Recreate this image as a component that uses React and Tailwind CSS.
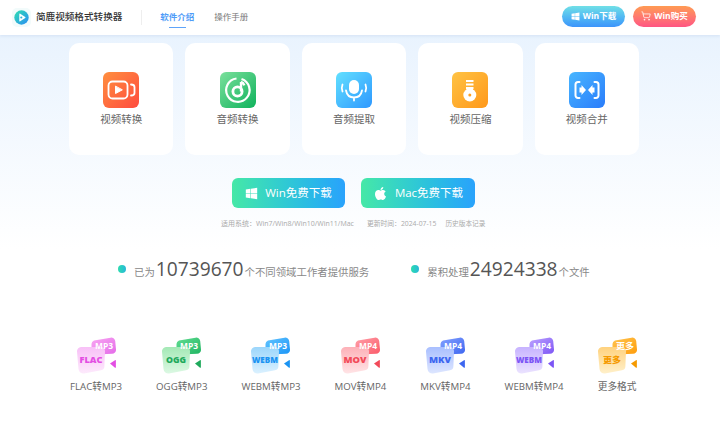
import { FaWindows, FaApple } from 'react-icons/fa';
import { ShoppingCart } from 'lucide-react';

const FONT = 'font-["Open_Sans","Noto_Sans_CJK_SC",sans-serif]';

const tools = [
  {
    label: '视频转换',
    from: '#ff8f3f',
    to: '#ff4b3e',
    icon: (
      <g stroke="#fff" fill="none" strokeWidth="1.800" strokeLinecap="round">
        <rect x="5.500" y="9.500" width="19" height="17" rx="4" />
        <path d="M12.500 14.500v7l6.500-3.500z" fill="#fff" strokeLinejoin="round" strokeWidth="1" />
        <path d="M28 12.500c2.500 0 3.500 1 3.500 2.500v6c0 1.500-1 2.500-3.500 2.500" />
      </g>
    ),
  },
  {
    label: '音频转换',
    from: '#7be09c',
    to: '#0fb25c',
    icon: (
      <g stroke="#fff" fill="none">
        <path d="M16.500 6.500a11.700 11.700 0 1 0 5 .5" strokeWidth="2.200" />
        <circle cx="17.500" cy="19.500" r="4.600" strokeWidth="2.800" />
        <path d="M21 19.500V10" strokeWidth="2.400" />
        <path d="M21 10c1.500.5 2.800 1.700 3.300 3.300" strokeWidth="2.400" />
      </g>
    ),
  },
  {
    label: '音频提取',
    from: '#62e0ff',
    to: '#2e98ff',
    icon: (
      <g stroke="#fff" fill="none" strokeWidth="1.800" strokeLinecap="round">
        <rect x="13" y="8" width="10" height="14" rx="5" fill="#fff" stroke="none" />
        <path d="M10 18.500c.8 4.500 4 7 8 7s7.200-2.500 8-7M18 25.500v3" />
        <path d="M6.500 12.500c-.8 2-.8 5 0 7M29.500 12.500c.8 2 .8 5 0 7" />
      </g>
    ),
  },
  {
    label: '视频压缩',
    from: '#ffc344',
    to: '#ff981a',
    icon: (
      <g fill="#fff">
        <rect x="14" y="8" width="7.500" height="2" />
        <rect x="14" y="11.500" width="7.500" height="2" />
        <rect x="14" y="15" width="7.500" height="2" />
        <circle cx="17.800" cy="23" r="6.500" />
        <rect x="14.500" y="16" width="6.500" height="4" />
        <circle cx="17.800" cy="23" r="1.500" fill="#ff9f22" />
      </g>
    ),
  },
  {
    label: '视频合并',
    from: '#48b6ff',
    to: '#2a7cfb',
    icon: (
      <g fill="#fff">
        <path d="M10.500 10H9a2.500 2.500 0 0 0-2.500 2.500v11A2.500 2.500 0 0 0 9 26h1.500M25.500 10H27a2.500 2.500 0 0 1 2.500 2.500v11A2.500 2.500 0 0 1 27 26h-1.500" fill="none" stroke="#fff" strokeWidth="2" strokeLinecap="round" />
        <path d="M10.500 15.500h2V13l4.500 5-4.500 5v-2.500h-2zM25.500 15.500h-2V13L19 18l4.500 5v-2.500h2z" />
      </g>
    ),
  },
];

const formats = [
  { id: 'flac', src: 'FLAC', srcW: 23, dst: 'MP3', label: 'FLAC转MP3', back: ['#f9a8f2', '#e46ae9'], front: ['#fdeafc', '#f8c0f7'], accent: '#e34ee3' },
  { id: 'ogg', src: 'OGG', srcW: 20, dst: 'MP3', label: 'OGG转MP3', back: ['#62dd92', '#20b563'], front: ['#dcf8e3', '#a4e9b6'], accent: '#1fa95c' },
  { id: 'webm', src: 'WEBM', srcW: 26, dst: 'MP3', label: 'WEBM转MP3', back: ['#63c4ff', '#1a95f7'], front: ['#dbf1ff', '#9cd6fb'], accent: '#1a93f2' },
  { id: 'mov', src: 'MOV', srcW: 23, dst: 'MP4', label: 'MOV转MP4', back: ['#ffa0a9', '#fb5a69'], front: ['#ffe4e6', '#fdb1b8'], accent: '#f24a59' },
  { id: 'mkv', src: 'MKV', srcW: 22, dst: 'MP4', label: 'MKV转MP4', back: ['#84a1ff', '#3d66f0'], front: ['#dde6ff', '#a9bfff'], accent: '#3d66f0' },
  { id: 'webm4', src: 'WEBM', srcW: 26, dst: 'MP4', label: 'WEBM转MP4', back: ['#bda3ff', '#7c55f5'], front: ['#ebe3ff', '#c7b3ff'], accent: '#7c55f5' },
  { id: 'more', src: '更多', srcW: 18, dst: '更多', label: '更多格式', back: ['#ffc552', '#ff9c0a'], front: ['#fff0ca', '#ffd27e'], accent: '#f59a00' },
];

function ToolIcon({ tool, id }) {
  return (
    <svg width="36" height="36" viewBox="0 0 36 36">
      <defs>
        <linearGradient id={id} x1="0" y1="0" x2="1" y2="1">
          <stop offset="0" stopColor={tool.from} />
          <stop offset="1" stopColor={tool.to} />
        </linearGradient>
      </defs>
      <rect width="36" height="36" rx="6" fill={`url(#${id})`} />
      {tool.icon}
    </svg>
  );
}

function FormatIcon({ item }) {
  return (
    <svg width="39" height="37" viewBox="0 0 39 37" className="shrink-0">
      <defs>
        <linearGradient id={`${item.id}-b`} x1="0" y1="0" x2="1" y2="1">
          <stop offset="0" stopColor={item.back[0]} />
          <stop offset="1" stopColor={item.back[1]} />
        </linearGradient>
        <linearGradient id={`${item.id}-f`} x1="0" y1="0" x2="0" y2="1">
          <stop offset="0" stopColor={item.front[1]} />
          <stop offset="1" stopColor={item.front[0]} />
        </linearGradient>
      </defs>
      <path d="M17 3.500 33.500 .7a4 4 0 0 1 4.700 3.300L39 12.500a4 4 0 0 1-4 4.300l-16 .7a4 4 0 0 1-4.500-4V7.500A4 4 0 0 1 17 3.500z" fill={`url(#${item.id}-b)`} />
      <path d="M4 10h20a4 4 0 0 1 4 4.200l-.6 15a4 4 0 0 1-3.400 4L7 36.500a5 5 0 0 1-5.500-4.500L0 14.500A4.200 4.200 0 0 1 4 10z" fill={`url(#${item.id}-f)`} />
      <text x="27" y="12" textAnchor="middle" fontSize="8.500" fontWeight="700" fill="#fff" textLength="18" lengthAdjust="spacingAndGlyphs" fontFamily="Open Sans, Noto Sans CJK SC, sans-serif">{item.dst}</text>
      <text x="14" y="26" textAnchor="middle" fontSize="8.500" fontWeight="800" fill={item.accent} textLength={item.srcW} lengthAdjust="spacingAndGlyphs" fontFamily="Open Sans, Noto Sans CJK SC, sans-serif">{item.src}</text>
      <path d="M33 26.500l5-3.300a.6.600 0 0 1 .9.500v6.500a.6.600 0 0 1-.9.500z" fill={item.accent} />
    </svg>
  );
}

export default function App() {
  return (
    <div className={`h-[424px] w-[720px] overflow-hidden bg-white ${FONT}`}>
      {/* 顶部导航 */}
      <header className="relative flex h-[35px] items-center bg-white pl-[12px] pr-[24px] shadow-[0_1px_3px_rgba(90,130,190,0.15)]">
        <div className="flex h-[19px] w-[19px] items-center justify-center rounded-[5px] bg-[#f2fbfb]">
          <svg width="15" height="15" viewBox="0 0 15 15">
            <defs>
              <linearGradient id="logo" x1="0" y1="0" x2="1" y2="1">
                <stop offset="0" stopColor="#2fe0b0" />
                <stop offset="1" stopColor="#2a8cf5" />
              </linearGradient>
            </defs>
            <circle cx="7.500" cy="7.500" r="7.200" fill="url(#logo)" />
            <path d="M5.300 4.200v6.600a.6.600 0 0 0 .9.500l5-3.300a.6.600 0 0 0 0-1l-5-3.300a.6.600 0 0 0-.9.500z" fill="#fff" />
            <circle cx="7.300" cy="7.500" r="1.100" fill="#2fb5d5" />
          </svg>
        </div>
        <span className="ml-[5px] text-[9.600px] font-medium text-[#333]">简鹿视频格式转换器</span>
        <div className="ml-[19px] h-[15px] w-px bg-[#eeeeee]" />
        <nav className="ml-[18px] flex h-full items-center gap-[20px] text-[8.500px]">
          <div className="relative flex h-full items-center font-bold text-[#4f9cf8]">
            软件介绍
            <span className="absolute bottom-[7px] left-[9px] h-[1.500px] w-[17px] bg-[#5fa4fa]" />
          </div>
          <div className="text-[#777]">操作手册</div>
        </nav>
        <div className="mb-[3px] ml-auto flex gap-[8px] text-[8.500px] font-bold text-white">
          <div className="flex h-[21px] w-[63px] items-center justify-center gap-[3px] rounded-full bg-gradient-to-b from-[#70dfe6] to-[#3d94fb]">
            <FaWindows className="h-[9px] w-[9px]" />
            Win下载
          </div>
          <div className="flex h-[21px] w-[63px] items-center justify-center gap-[3px] rounded-full bg-gradient-to-b from-[#ff9a52] to-[#ff5482]">
            <ShoppingCart className="h-[10px] w-[10px]" strokeWidth={1.800} />
            Win购买
          </div>
        </div>
      </header>

      <main className="h-[389px] bg-gradient-to-b from-[#e9f3fe] via-white via-[55%] to-white pt-[8px]">
        {/* 功能卡片 */}
        <div className="ml-[69px] grid w-[570px] grid-cols-5 gap-[12px]">
          {tools.map((tool, i) => (
            <div key={tool.label} className="flex h-[112px] flex-col items-center rounded-[10px] bg-white pt-[29px]">
              <ToolIcon tool={tool} id={`tool-${i}`} />
              <span className="mt-[3px] text-[10.500px] leading-[16px] text-[#666]">{tool.label}</span>
            </div>
          ))}
        </div>

        {/* 下载按钮 */}
        <div className="ml-[232px] mt-[23px] flex gap-[16px] text-[11.500px] text-white">
          <div className="flex h-[30px] w-[113px] items-center justify-center gap-[7px] rounded-[6px] bg-gradient-to-r from-[#46e8a6] to-[#2aa2fc]">
            <FaWindows className="h-[13px] w-[13px]" />
            Win免费下载
          </div>
          <div className="flex h-[30px] w-[114px] items-center justify-center gap-[7px] rounded-[6px] bg-gradient-to-r from-[#46e8a6] to-[#2aa2fc]">
            <FaApple className="h-[15px] w-[15px]" />
            Mac免费下载
          </div>
        </div>

        <div className="ml-[221px] mt-[10px] flex text-[7px] leading-[12px] text-[#aaa]">
          <span>适用系统：Win7/Win8/Win10/Win11/Mac</span>
          <span className="ml-[13px] text-[6.800px]">更新时间：2024-07-15</span>
          <span className="ml-[9px] text-[6.700px]">历史版本记录</span>
        </div>

        {/* 统计 */}
        <div className="ml-[118px] mt-[24px] flex h-[30px] items-center text-[10.400px] text-[#888]">
          <span className="h-[8px] w-[8px] rounded-full bg-gradient-to-r from-[#2fdcae] to-[#2ab8d8]" />
          <span className="ml-[8px] flex items-baseline">
            已为<span className="mx-[1px] text-[19.200px] leading-[30px] text-[#555]">10739670</span>个不同领域工作者提供服务
          </span>
          <span className="ml-[42px] h-[8px] w-[8px] rounded-full bg-gradient-to-r from-[#2fdcae] to-[#2ab8d8]" />
          <span className="ml-[8px] flex items-baseline">
            累积处理<span className="mx-[1px] text-[19.200px] leading-[30px] text-[#555]">24924338</span>个文件
          </span>
        </div>

        {/* 格式列表 */}
        <div className="ml-[70px] mt-[53px] flex gap-[34px]">
          {formats.map((item) => (
            <div key={item.id} className="flex flex-col items-center">
              <FormatIcon item={item} />
              <span className="mt-[5px] whitespace-nowrap text-[9.700px] leading-[16px] text-[#666]">{item.label}</span>
            </div>
          ))}
        </div>
      </main>
    </div>
  );
}
